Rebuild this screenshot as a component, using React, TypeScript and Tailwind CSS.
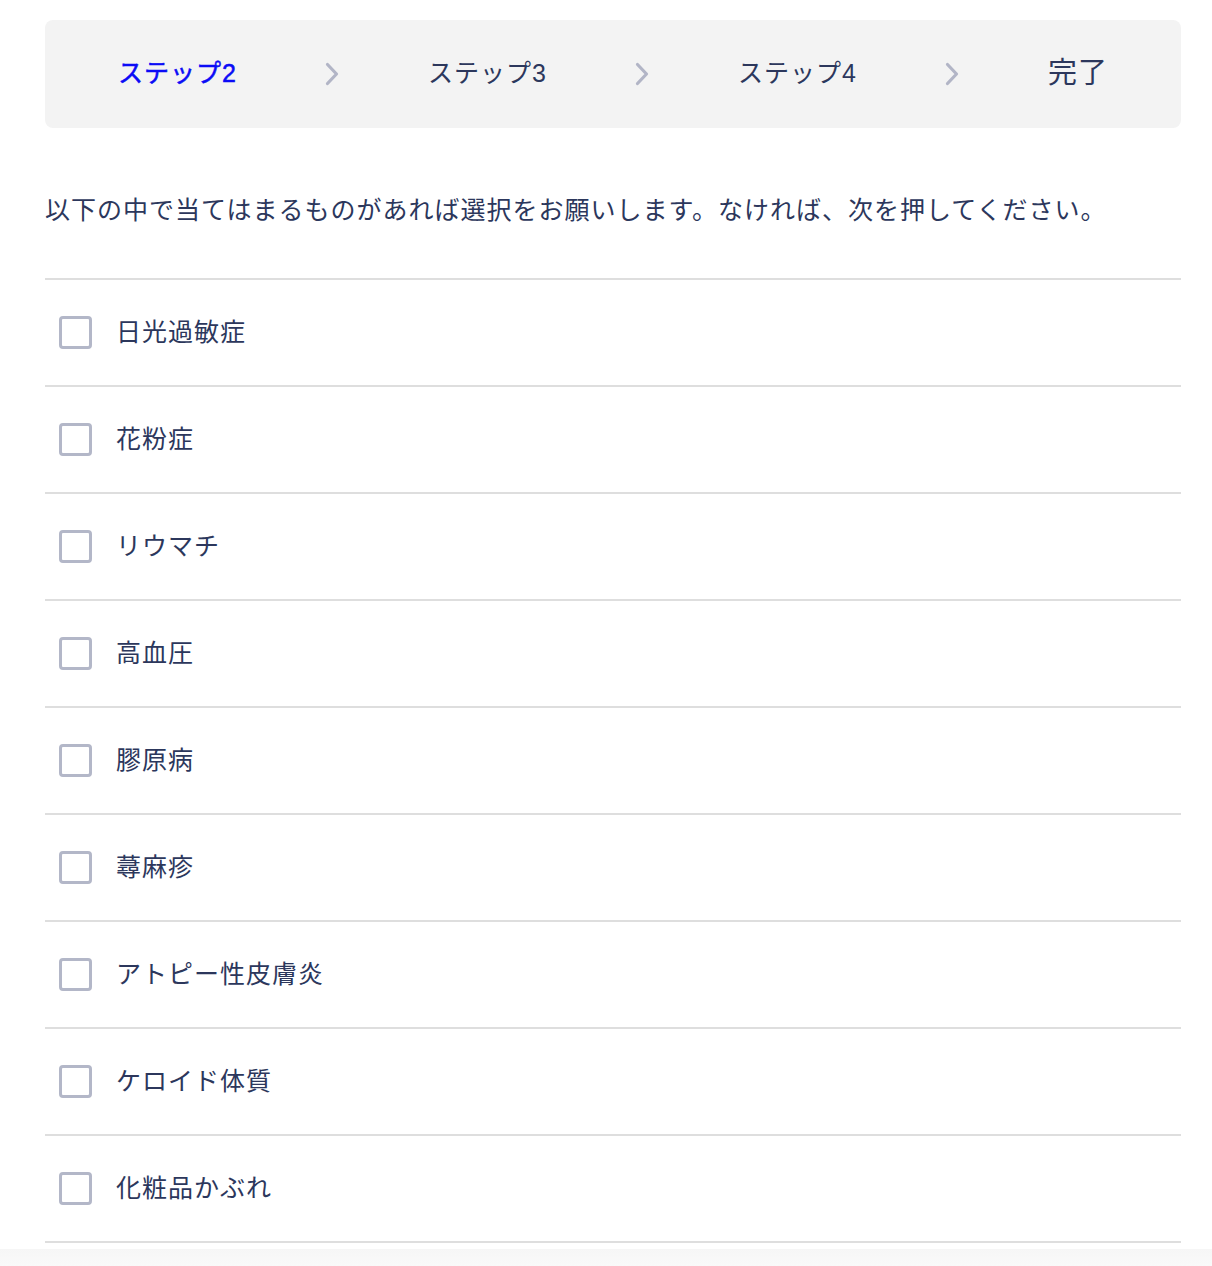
import { Fragment } from "react"

const steps = [
  { label: "ステップ2", active: true },
  { label: "ステップ3", active: false },
  { label: "ステップ4", active: false },
  { label: "完了", active: false, large: true },
]

const conditions = [
  "日光過敏症",
  "花粉症",
  "リウマチ",
  "高血圧",
  "膠原病",
  "蕁麻疹",
  "アトピー性皮膚炎",
  "ケロイド体質",
  "化粧品かぶれ",
]

function Chevron() {
  return (
    <svg width="16" height="24" viewBox="0 0 16 24" fill="none" className="shrink-0">
      <path d="M3.5 2.5l9 9.5-9 9.5" stroke="#b2b5c6" strokeWidth="3.2" strokeLinecap="round" strokeLinejoin="round" />
    </svg>
  )
}

export default function App() {
  return (
    <div
      className="min-h-[1266px] bg-white text-[#2c375c]"
      style={{ fontFamily: '"Liberation Sans", "Noto Sans CJK JP", sans-serif' }}
    >
      <div className="pl-[45px] pr-[31px] pt-[20px]">
        <nav className="flex h-[108px] items-center justify-between rounded-[8px] bg-[#f3f3f3] px-[73px]">
          {steps.map((s, i) => (
            <Fragment key={s.label}>
              {i > 0 && <Chevron />}
              <span
                className={
                  s.active
                    ? "text-[25px] tracking-[1px] text-[#0b0bf6] [-webkit-text-stroke:0.5px_#0b0bf6]"
                    : s.large
                      ? "text-[29px] tracking-[1px]"
                      : "text-[25px] tracking-[1px]"
                }
              >
                {s.label}
              </span>
            </Fragment>
          ))}
        </nav>

        <p className="mt-[64px] text-[25px] leading-[36px] tracking-[1px]">
          以下の中で当てはまるものがあれば選択をお願いします。なければ、次を押してください。
        </p>

        <ul className="mt-[50px] border-t-2 border-[#dedede]">
          {conditions.map((c) => (
            <li key={c} className="flex h-[107px] items-center gap-[24px] border-b-2 border-[#dedede] pl-[14px]">
              <span className="size-[33px] shrink-0 rounded-[4px] border-[3px] border-[#b3b7c8] bg-white" />
              <span className="text-[25px] tracking-[1px]">{c}</span>
            </li>
          ))}
        </ul>
      </div>
      <div className="mt-[6px] h-[24px] bg-gradient-to-b from-[#f6f6f6] to-[#fbfbfb]" />
    </div>
  )
}
